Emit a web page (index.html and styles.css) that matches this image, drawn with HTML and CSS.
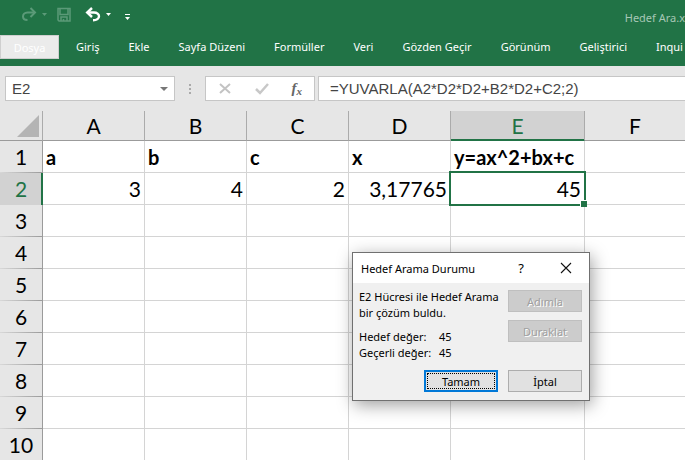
FILE: index.html
```html
<!DOCTYPE html>
<html lang="tr">
<head>
<meta charset="utf-8">
<title>Hedef Ara</title>
<link rel="stylesheet" href="styles.css">
</head>
<body>
<div class="app">
  <header class="ribbon">
    <div class="titlebar">
      <div class="quick">
        <button class="tool dim" aria-label="Yinele"><svg width="28" height="16" viewBox="0 0 28 16"><path d="M13 5.500H6.500C3.500 5.500 2 7.500 2 9.500S3.500 13 6.500 13" fill="none" stroke="currentColor" stroke-width="2"/><path d="M9.500 1l4.500 4.500L9.500 10" fill="none" stroke="currentColor" stroke-width="2"/><path d="M21 6h5l-2.500 3z" fill="currentColor"/></svg></button>
        <button class="tool dim" aria-label="Kaydet"><svg width="16" height="16" viewBox="0 0 16 16"><path d="M2 1.500h12v12.500H3l-1-1zM4 1.500v6h8v-6M5 14v-4h6v4M7.500 12v2" fill="none" stroke="currentColor" stroke-width="1.500"/></svg></button>
        <button class="tool undo" aria-label="Geri al"><svg width="28" height="16" viewBox="0 0 28 16"><path d="M2 5.500h7c3 0 5 1.700 5 3.700s-2 4-6 4" fill="none" stroke="currentColor" stroke-width="2.400"/><path d="M7 1L2.200 5.500 7 10" fill="none" stroke="currentColor" stroke-width="2.400"/><path d="M21 6h5l-2.500 3z" fill="currentColor"/></svg></button>
        <button class="tool" aria-label="Özelleştir"><svg width="8" height="16" viewBox="0 0 8 16"><path d="M1 7h5v1H1zM1 10h5l-2.500 3z" fill="currentColor"/></svg></button>
      </div>
      <span class="doc">Hedef Ara.x</span>
    </div>
    <nav class="tabs">
      <a class="file" href="#">Dosya</a>
      <a href="#">Giriş</a>
      <a href="#">Ekle</a>
      <a href="#">Sayfa Düzeni</a>
      <a href="#">Formüller</a>
      <a href="#">Veri</a>
      <a href="#">Gözden Geçir</a>
      <a href="#">Görünüm</a>
      <a href="#">Geliştirici</a>
      <a href="#">Inqui</a>
    </nav>
  </header>
  <div class="formula-bar">
    <div class="box name">
      <input aria-label="Ad kutusu" value="E2">
      <button aria-label="Adları aç"><svg width="8" height="4" viewBox="0 0 8 4"><path d="M0 0h8L4 4z" fill="#777"/></svg></button>
    </div>
    <svg class="grip" width="2" height="10" viewBox="0 0 2 10"><path d="M0 0h2v2H0zM0 4h2v2H0zM0 8h2v2H0z" fill="#aaa"/></svg>
    <div class="box actions">
      <button aria-label="İptal et"><svg width="14" height="14" viewBox="0 0 14 14"><path d="M2 2l10 9M12 2L2 11" stroke="#c3c3c3" stroke-width="2"/></svg></button>
      <button aria-label="Gir"><svg width="14" height="14" viewBox="0 0 14 14"><path d="M1 7l4 4 8-9" fill="none" stroke="#c8c8c8" stroke-width="2.500"/></svg></button>
      <button class="fx" aria-label="İşlev ekle">f<span>x</span></button>
    </div>
    <div class="box formula"><input aria-label="Formül" value="=YUVARLA(A2*D2*D2+B2*D2+C2;2)"></div>
  </div>
  <table class="sheet">
    <colgroup><col class="c-row"><col class="c"><col class="c"><col class="c"><col class="c"><col class="c-wide"><col></colgroup>
    <thead><tr><td class="corner"><svg width="22" height="22" viewBox="0 0 22 22"><path d="M22 0v22H0z" fill="#b4b4b4"/></svg></td><th>A</th><th>B</th><th>C</th><th>D</th><th class="active">E</th><th>F</th></tr></thead>
    <tbody>
      <tr class="labels"><th>1</th><td>a</td><td>b</td><td>c</td><td>x</td><td>y=ax^2+bx+c</td><td></td></tr>
      <tr><th class="active">2</th><td>3</td><td>4</td><td>2</td><td>3,17765</td><td class="selected">45</td><td></td></tr>
      <tr><th>3</th><td></td><td></td><td></td><td></td><td></td><td></td></tr>
      <tr><th>4</th><td></td><td></td><td></td><td></td><td></td><td></td></tr>
      <tr><th>5</th><td></td><td></td><td></td><td></td><td></td><td></td></tr>
      <tr><th>6</th><td></td><td></td><td></td><td></td><td></td><td></td></tr>
      <tr><th>7</th><td></td><td></td><td></td><td></td><td></td><td></td></tr>
      <tr><th>8</th><td></td><td></td><td></td><td></td><td></td><td></td></tr>
      <tr><th>9</th><td></td><td></td><td></td><td></td><td></td><td></td></tr>
      <tr><th>10</th><td></td><td></td><td></td><td></td><td></td><td></td></tr>
    </tbody>
  </table>
  <section class="dialog" role="dialog" aria-labelledby="dlg-title">
    <div class="dialog-head">
      <h1 id="dlg-title">Hedef Arama Durumu</h1>
      <button class="help" aria-label="Yardım">?</button>
      <button aria-label="Kapat"><svg width="12" height="12" viewBox="0 0 12 12"><path d="M1 1l10 10M11 1L1 11" stroke="#111" stroke-width="1.100"/></svg></button>
    </div>
    <div class="dialog-body">
      <div class="message">
        <p>E2 Hücresi ile Hedef Arama<br>bir çözüm buldu.</p>
        <dl><dt>Hedef değer:</dt><dd>45</dd><dt>Geçerli değer:</dt><dd>45</dd></dl>
      </div>
      <div class="side">
        <button class="btn" disabled>Adımla</button>
        <button class="btn" disabled>Duraklat</button>
      </div>
      <div class="confirm">
        <button class="btn primary">Tamam</button>
        <button class="btn">İptal</button>
      </div>
    </div>
  </section>
</div>
</body>
</html>
```
FILE: styles.css
```css
* { box-sizing: border-box; }
body { margin: 0; padding: 0 13px 11px 0; background: #fff; font-family: "Noto Sans", "Open Sans", sans-serif; }
button, input { font: inherit; color: inherit; margin: 0; padding: 0; border: 0; background: none; }
button { display: flex; align-items: center; justify-content: center; }
.app { position: relative; overflow: hidden; background: #e6e6e6; }

.ribbon { background: #217346; color: #fff; font-size: 11px; }
.titlebar { display: flex; justify-content: space-between; height: 35px; padding: 7px 0 0 21px; }
.quick { display: flex; gap: 7px; height: 16px; }
.quick .undo { margin-left: 6px; }
.quick .tool:last-child { margin-left: 4px; }
.dim { color: #5b9a78; }
.doc { line-height: 22px; color: #a6c7b5; }
.tabs { display: flex; align-items: center; gap: 29px; height: 31px; padding-bottom: 7px; overflow: hidden; white-space: nowrap; }
.tabs a { color: #fff; text-decoration: none; line-height: 24px; }
.tabs .file { flex: none; width: 59px; height: 24px; margin-right: -12px; border: 1px solid #cfcfcf; background: #ebebeb; text-align: center; }

.formula-bar { display: flex; align-items: center; height: 45px; padding: 0 0 0 5px; font: 15px "Liberation Sans", Arial, sans-serif; color: #444; }
.box { display: flex; height: 25px; border: 1px solid #c6c6c6; background: #fff; }
.box input { flex: 1; min-width: 0; outline: 0; }
.name { width: 170px; padding: 0 6px; }
.grip { margin: 0 14px; }
.actions { width: 110px; justify-content: space-between; padding: 0 12px; }
.fx { font: italic bold 15px "Liberation Serif", serif; color: #666; }
.fx span { font-size: 11px; padding-top: 4px; }
.formula { flex: 1; margin-left: 3px; padding-left: 11px; border-right: 0; }

.sheet { width: 100%; table-layout: fixed; border-spacing: 0; font: 21px/24px Lato, sans-serif; color: #000; }
.c-row { width: 43px; }
.c { width: 102px; }
.c-wide { width: 134px; }
.sheet td, .sheet th { padding: 0; }
.sheet th { font-weight: 400; text-align: center; }
.sheet thead th, .corner { height: 30px; border-bottom: 1px solid #9b9b9b; border-right: 1px solid #ababab; background: #e6e6e6; }
.sheet thead .active { border-bottom-color: #217346; box-shadow: inset 0 -1px #217346; }
.sheet .active { background: #d2d2d2; color: #217346; }
.corner svg { display: block; margin: 0 0 0 17px; }
.sheet tbody th { border-right: 1px solid #9b9b9b; background: linear-gradient(90deg, #d8d8d8, #9b9b9b) bottom / 100% 1px no-repeat, #e6e6e6; }
.sheet tbody .active { border-right-color: #217346; box-shadow: inset -1px 0 #217346; background-color: #d2d2d2; }
.sheet tbody td { height: 32px; padding: 0 3px; text-align: right; background: #fff; border-right: 1px solid #d4d4d4; border-bottom: 1px solid #d4d4d4; }
.sheet tbody .labels td { font-size: 20px; font-weight: 700; text-align: left; }
.sheet tr > :last-child { border-right: 0; }
.sheet tbody tr:last-child > * { height: 31px; border-bottom: 0; }
.sheet tbody tr:last-child th { background: #e6e6e6; }
.sheet .selected { position: relative; }
.selected::before { content: ""; position: absolute; inset: -2px; border: 2px solid #217346; }
.selected::after { content: ""; position: absolute; right: -3px; bottom: -3px; width: 6px; height: 6px; background: #217346; border: solid #fff; border-width: 1px 0 0 1px; }

.dialog { position: absolute; left: 352px; top: 252px; width: 238px; border: 1px solid #707070; background: #f0f0f0; box-shadow: 2px 4px 16px rgba(0, 0, 0, .38); font-size: 11px; color: #000; }
.dialog-head { display: flex; align-items: center; height: 30px; padding: 0 17px 0 8px; background: #fff; }
.dialog-head h1 { flex: 1; margin: 0; font-size: 11px; font-weight: 400; white-space: nowrap; }
.dialog-head .help { margin-right: 36px; font-size: 13px; }
.dialog-body { display: grid; grid-template-columns: 1fr 74px; gap: 9px 8px; padding: 6px 7px 8px 6px; }
.message { line-height: 16px; white-space: nowrap; }
.message p { margin: 0 0 8px; }
.message dl { display: grid; grid-template-columns: 80px 1fr; margin: 0; }
.message dd { margin: 0; }
.side { display: flex; flex-direction: column; gap: 8px; padding-top: 1px; }
.confirm { grid-column: 1 / 3; display: flex; justify-content: flex-end; gap: 10px; }
.btn { width: 74px; height: 22px; border: 1px solid #adadad; background: #e1e1e1; }
.btn:disabled { border-color: #bfbfbf; background: #ccc; color: #a0a0a0; text-shadow: 1px 1px #fff; }
.btn.primary { border: 2px solid #0078d7; outline: 1px dotted #000; outline-offset: -4px; }
```
